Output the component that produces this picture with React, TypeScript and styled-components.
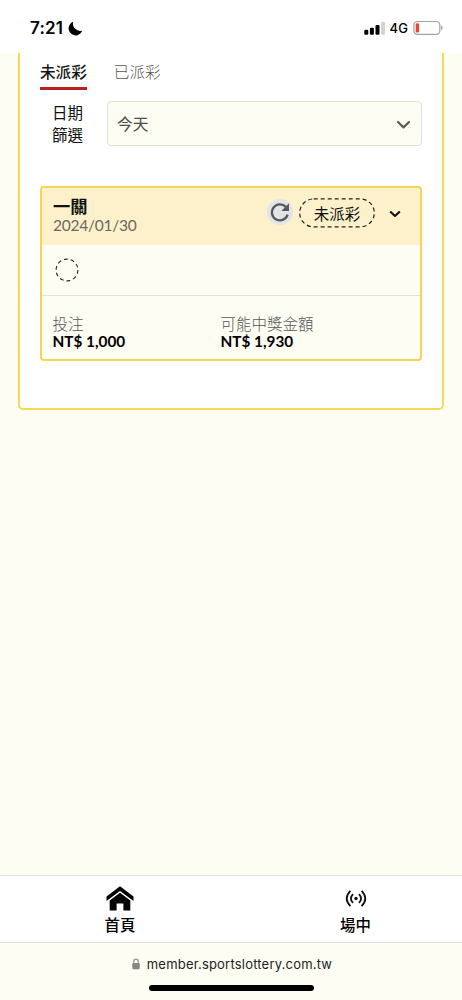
import React from 'react';
import styled, { createGlobalStyle } from 'styled-components';

const cjk = `'Noto Sans CJK TC', sans-serif`;

const GlobalStyle = createGlobalStyle`
  * { box-sizing: border-box; }
  body { margin: 0; background: #fdfdf3; font-family: Lato, ${cjk}; color: #111; }
`;

const Screen = styled.div`
  width: 462px;
  height: 1000px;
  display: flex;
  flex-direction: column;
  background: #fdfdf3;
  overflow: hidden;
`;

const StatusBar = styled.header`
  height: 53px;
  flex: none;
  padding: 3px 19px 0 30px;
  display: flex;
  align-items: center;
  justify-content: space-between;
  background: #fff;
  font-family: Inter, sans-serif;
  color: #000;
`;

const StatusGroup = styled.div<{ $gap: number }>`
  display: flex;
  align-items: center;
  gap: ${(p) => p.$gap}px;
`;

const Clock = styled.span`
  font-size: 17px;
  font-weight: 600;
  line-height: 20px;
  letter-spacing: 0.2px;
`;

const Network = styled.span`
  font-size: 13px;
  font-weight: 500;
  line-height: 16px;
  letter-spacing: 0.1px;
`;

const Main = styled.main`
  flex: 1;
  padding: 0 18px;
`;

const Panel = styled.section`
  height: 357px;
  padding: 0 20px;
  background: #fff;
  border: 2px solid #f5d955;
  border-top: 0;
  border-radius: 0 0 5px 5px;
`;

const Tabs = styled.nav`
  display: flex;
  gap: 27px;
  height: 37px;
`;

const Tab = styled.div<{ $active?: boolean }>`
  height: 37px;
  padding-top: 6px;
  font-size: 15.6px;
  line-height: 24px;
  font-family: ${cjk};
  font-weight: ${(p) => (p.$active ? 500 : 300)};
  color: ${(p) => (p.$active ? '#151515' : '#555')};
  border-bottom: 3px solid ${(p) => (p.$active ? '#b7211f' : 'transparent')};
`;

const FilterRow = styled.div`
  display: flex;
  align-items: center;
  gap: 24px;
  margin-top: 11px;
  padding-left: 12px;
  height: 45px;
`;

const FilterLabel = styled.label`
  width: 31px;
  padding-bottom: 2px;
  font-family: ${cjk};
  font-size: 15.5px;
  line-height: 22px;
  text-align: center;
`;

const Select = styled.div`
  flex: 1;
  height: 45px;
  padding: 0 10px 0 9px;
  display: flex;
  align-items: center;
  justify-content: space-between;
  background: #fdfdf3;
  border: 1px solid #e2e2d6;
  border-radius: 4px;
  font-family: ${cjk};
  font-size: 15.8px;
  line-height: 24px;
  color: #4c4c49;
`;

const Card = styled.article`
  width: 382px;
  height: 175px;
  margin-top: 40px;
  background: #fdfdf3;
  border: 2px solid #f3d653;
  border-radius: 4px;
  overflow: hidden;
`;

const CardHeader = styled.div`
  height: 57px;
  padding: 0 19px 0 11px;
  display: flex;
  justify-content: space-between;
  background: #fdf1cc;
`;

const Title = styled.div`
  margin-top: 6px;
  font-family: ${cjk};
  font-size: 17.3px;
  font-weight: 700;
  line-height: 24px;
`;

const DateText = styled.div`
  margin-top: -1px;
  font-size: 15.5px;
  line-height: 16px;
  letter-spacing: -0.25px;
  color: #6a675c;
`;

const Actions = styled.div`
  height: 30px;
  margin-top: 10px;
  display: flex;
  align-items: center;
`;

const Refresh = styled.div`
  width: 26px;
  height: 26px;
  margin: -2px 6px 0 0;
  display: flex;
  align-items: center;
  justify-content: center;
  border-radius: 50%;
  background: #e3e4e8;
`;

const Badge = styled.div`
  position: relative;
  width: 76px;
  height: 30px;
  margin-right: 14px;
  font-family: ${cjk};
  font-size: 15.5px;
  line-height: 30px;
  text-align: center;
`;

const BadgeOutline = styled.svg`
  position: absolute;
  inset: 0;
`;

const CardBody = styled.div`
  height: 51px;
  padding: 13px 0 0 13px;
  border-bottom: 1px solid #e2e2dc;
`;

const Amounts = styled.div`
  display: grid;
  grid-template-columns: 168px 1fr;
  padding: 16px 0 0 10.5px;
`;

const AmountLabel = styled.div`
  font-family: ${cjk};
  font-size: 15.5px;
  font-weight: 300;
  line-height: 23px;
  color: #555;
`;

const AmountValue = styled.div`
  font-size: 15.3px;
  font-weight: 700;
  line-height: 13px;
  letter-spacing: 0;
  color: #000;
`;

const BottomNav = styled.nav`
  height: 68px;
  flex: none;
  display: grid;
  grid-template-columns: 240px 1fr;
  background: #fff;
  border-top: 1px solid #dededb;
  border-bottom: 1px solid #dededb;
`;

const NavItem = styled.div<{ $offset: number }>`
  display: flex;
  flex-direction: column;
  align-items: center;
  padding-left: ${(p) => p.$offset}px;
  font-family: ${cjk};
  font-size: 15.4px;
  font-weight: 500;
  line-height: 24px;
  color: #000;
`;

const NavIcon = styled.div`
  height: 36px;
  padding-top: 9px;
  display: flex;
  align-items: center;
`;

const BrowserBar = styled.footer`
  height: 57px;
  flex: none;
  display: flex;
  flex-direction: column;
  align-items: center;
`;

const Address = styled.div`
  margin-top: 11px;
  display: flex;
  align-items: center;
  gap: 7px;
  font-family: Inter, sans-serif;
  font-size: 13px;
  line-height: 20px;
  letter-spacing: 0.2px;
  padding-left: 2px;
  color: #222;
`;

const HomeIndicator = styled.div`
  width: 165px;
  height: 6px;
  margin-top: 11px;
  border-radius: 3px;
  background: #000;
`;

export default function App() {
  return (
    <Screen>
      <GlobalStyle />
      <StatusBar>
        <StatusGroup $gap={5}>
          <Clock>7:21</Clock>
          <svg width="15" height="15" viewBox="0 0 15 15">
            <path d="M5.2.8A7 7 0 1 0 14.2 9.7C8.9 10.8 3.6 6.6 5.2.8Z" />
          </svg>
        </StatusGroup>
        <StatusGroup $gap={5}>
          <svg width="21" height="14" viewBox="0 0 21 14">
            <rect x="0.3" y="8.8" width="4" height="5" rx="1.2" />
            <rect x="5.9" y="6.8" width="4" height="7" rx="1.2" />
            <rect x="11.5" y="4" width="4" height="9.8" rx="1.2" />
            <rect x="17.1" y="0.8" width="4" height="13" rx="1.2" fill="#d2d2d2" />
          </svg>
          <Network>4G</Network>
          <svg width="30" height="15" viewBox="0 0 30 15">
            <rect x="0.9" y="0.5" width="25.9" height="12.8" rx="3.6" fill="none" stroke="#a3a3a3" strokeWidth="1.2" />
            <rect x="2.7" y="2.3" width="3.3" height="9.2" rx="1.2" fill="#ed4534" />
            <path d="M28 4.6c2 .5 2 4 0 4.6Z" fill="#a3a3a3" />
          </svg>
        </StatusGroup>
      </StatusBar>
      <Main>
        <Panel>
          <Tabs>
            <Tab $active>未派彩</Tab>
            <Tab>已派彩</Tab>
          </Tabs>
          <FilterRow>
            <FilterLabel>日期篩選</FilterLabel>
            <Select>
              今天
              <svg width="15" height="10" viewBox="0 0 15 10" fill="none">
                <path d="M2 3 7.5 8.4 13 3" stroke="#5c5c5a" strokeWidth="2.2" strokeLinecap="round" strokeLinejoin="round" />
              </svg>
            </Select>
          </FilterRow>
          <Card>
            <CardHeader>
              <div>
                <Title>一關</Title>
                <DateText>2024/01/30</DateText>
              </div>
              <Actions>
                <Refresh>
                  <svg width="20" height="20" viewBox="0 0 20 20" fill="none">
                    <path d="M15.8 4.9A8 8 0 1 0 17.6 12.6" stroke="#56585a" strokeWidth="2.3" />
                    <path d="M19 1.2V8.9H11.3Z" fill="#56585a" />
                  </svg>
                </Refresh>
                <Badge>
                  <BadgeOutline width="76" height="30" viewBox="0 0 76 30" fill="none">
                    <rect x="0.7" y="0.9" width="74.6" height="28" rx="14" stroke="#222" strokeWidth="1.2" strokeDasharray="4 3" />
                  </BadgeOutline>
                  未派彩
                </Badge>
                <svg width="12" height="8" viewBox="0 0 12 8" fill="none">
                  <path d="M1.2 2.4 6 7 10.8 2.4" stroke="#111" strokeWidth="2.1" />
                </svg>
              </Actions>
            </CardHeader>
            <CardBody>
              <svg width="24" height="24" viewBox="0 0 24 24" fill="none">
                <circle cx="12" cy="12" r="10.9" stroke="#222" strokeWidth="1.1" strokeDasharray="3.8 3.05" />
              </svg>
            </CardBody>
            <Amounts>
              <div>
                <AmountLabel>投注</AmountLabel>
                <AmountValue>NT$ 1,000</AmountValue>
              </div>
              <div>
                <AmountLabel>可能中獎金額</AmountLabel>
                <AmountValue>NT$ 1,930</AmountValue>
              </div>
            </Amounts>
          </Card>
        </Panel>
      </Main>
      <BottomNav>
        <NavItem $offset={0}>
          <NavIcon>
            <svg width="28" height="26" viewBox="0 0 28 26">
              <path d="M14 .2 27.5 10.6V15L14 5 .5 15V10.6Z" />
              <path d="M14 6.8 24.3 14.6V24.5H17.4V17.6H10.6V24.5H3.7V14.6Z" />
            </svg>
          </NavIcon>
          首頁
        </NavItem>
        <NavItem $offset={9}>
          <NavIcon>
            <svg width="22" height="18" viewBox="0 0 22 18" fill="none" stroke="#111" strokeWidth="1.8">
              <circle cx="11" cy="8.5" r="1.7" fill="#111" stroke="none" />
              <path d="M5.4 .9Q-2 8.5 5.4 16.1M16.6 .9Q24 8.5 16.6 16.1M8 4.1Q3.8 8.5 8 12.9M14 4.1Q18.2 8.5 14 12.9" />
            </svg>
          </NavIcon>
          場中
        </NavItem>
      </BottomNav>
      <BrowserBar>
        <Address>
          <svg width="8" height="12" viewBox="0 0 8 12">
            <path d="M1.8 6V3.2a2.2 2.2 0 0 1 4.4 0V6" fill="none" stroke="#858583" strokeWidth="1.1" />
            <rect x="0.3" y="5" width="7.4" height="6.3" rx="1.2" fill="#858583" />
          </svg>
          <span>member.sportslottery.com.tw</span>
        </Address>
        <HomeIndicator />
      </BrowserBar>
    </Screen>
  );
}
